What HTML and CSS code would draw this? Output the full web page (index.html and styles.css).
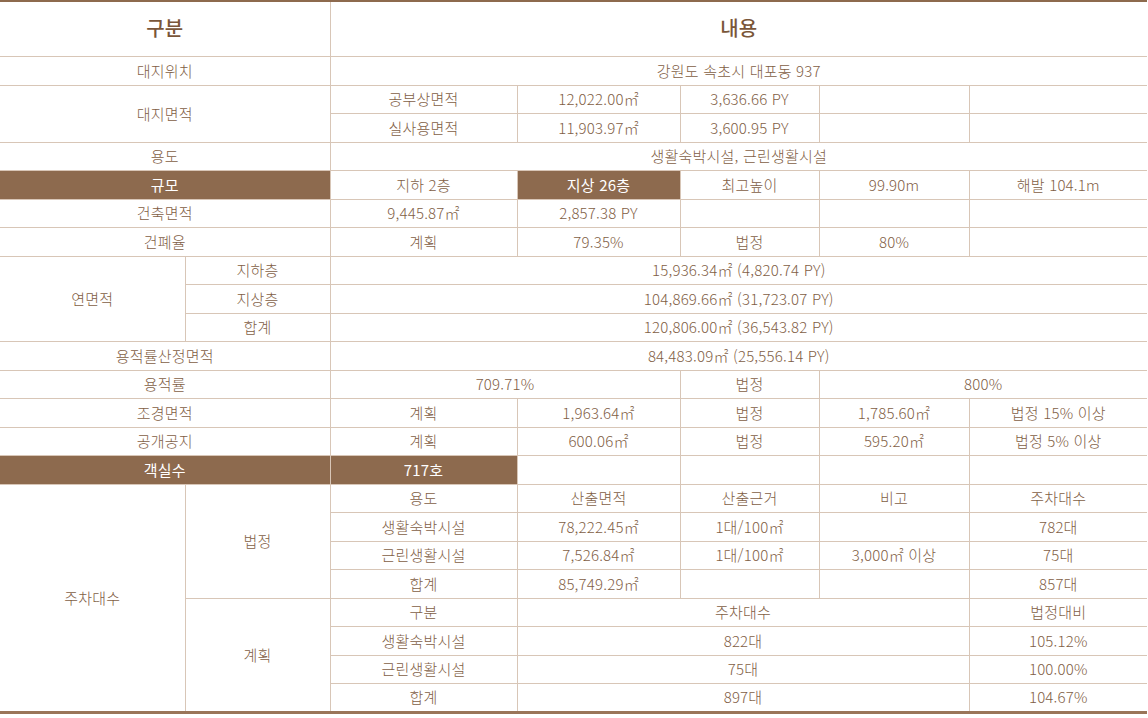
FILE: index.html
```html
<!DOCTYPE html>
<html lang="ko">
<head>
<meta charset="utf-8">
<link rel="stylesheet" href="styles.css">
</head>
<body>
<table class="spec">
  <colgroup>
    <col class="c1"><col class="c2"><col class="c3"><col class="c4"><col class="c5"><col class="c6"><col class="c7">
  </colgroup>
  <thead>
    <tr class="head"><th colspan="2">구분</th><th colspan="5">내용</th></tr>
  </thead>
  <tbody>
    <tr><td colspan="2">대지위치</td><td colspan="5">강원도 속초시 대포동 937</td></tr>
    <tr><td colspan="2" rowspan="2">대지면적</td><td>공부상면적</td><td>12,022.00㎡</td><td>3,636.66 PY</td><td></td><td></td></tr>
    <tr><td>실사용면적</td><td>11,903.97㎡</td><td>3,600.95 PY</td><td></td><td></td></tr>
    <tr><td colspan="2">용도</td><td colspan="5">생활숙박시설, 근린생활시설</td></tr>
    <tr><td colspan="2" class="hl">규모</td><td>지하 2층</td><td class="hl">지상 26층</td><td>최고높이</td><td>99.90m</td><td>해발 104.1m</td></tr>
    <tr><td colspan="2">건축면적</td><td>9,445.87㎡</td><td>2,857.38 PY</td><td></td><td></td><td></td></tr>
    <tr><td colspan="2">건폐율</td><td>계획</td><td>79.35%</td><td>법정</td><td>80%</td><td></td></tr>
    <tr><td rowspan="3">연면적</td><td>지하층</td><td colspan="5">15,936.34㎡ (4,820.74 PY)</td></tr>
    <tr><td>지상층</td><td colspan="5">104,869.66㎡ (31,723.07 PY)</td></tr>
    <tr><td>합계</td><td colspan="5">120,806.00㎡ (36,543.82 PY)</td></tr>
    <tr><td colspan="2">용적률산정면적</td><td colspan="5">84,483.09㎡ (25,556.14 PY)</td></tr>
    <tr><td colspan="2">용적률</td><td colspan="2">709.71%</td><td>법정</td><td colspan="2">800%</td></tr>
    <tr><td colspan="2">조경면적</td><td>계획</td><td>1,963.64㎡</td><td>법정</td><td>1,785.60㎡</td><td>법정 15% 이상</td></tr>
    <tr><td colspan="2">공개공지</td><td>계획</td><td>600.06㎡</td><td>법정</td><td>595.20㎡</td><td>법정 5% 이상</td></tr>
    <tr><td colspan="2" class="hl">객실수</td><td class="hl">717호</td><td></td><td></td><td></td><td></td></tr>
    <tr><td rowspan="8">주차대수</td><td rowspan="4">법정</td><td>용도</td><td>산출면적</td><td>산출근거</td><td>비고</td><td>주차대수</td></tr>
    <tr><td>생활숙박시설</td><td>78,222.45㎡</td><td>1대/100㎡</td><td></td><td>782대</td></tr>
    <tr><td>근린생활시설</td><td>7,526.84㎡</td><td>1대/100㎡</td><td>3,000㎡ 이상</td><td>75대</td></tr>
    <tr><td>합계</td><td>85,749.29㎡</td><td></td><td></td><td>857대</td></tr>
    <tr><td rowspan="4">계획</td><td>구분</td><td colspan="3">주차대수</td><td>법정대비</td></tr>
    <tr><td>생활숙박시설</td><td colspan="3">822대</td><td>105.12%</td></tr>
    <tr><td>근린생활시설</td><td colspan="3">75대</td><td>100.00%</td></tr>
    <tr><td>합계</td><td colspan="3">897대</td><td>104.67%</td></tr>
  </tbody>
</table>
</body>
</html>
```

FILE: styles.css
```css
html, body {
  margin: 0;
  padding: 0;
  background: #ffffff;
}

body {
  font-family: "Noto Sans CJK KR", "Noto Sans", sans-serif;
  color: #7f5e45;
}

.spec {
  width: 1147px;
  border-collapse: collapse;
  table-layout: fixed;
  border-top: 2px solid #8d6a4e;
  border-bottom: 3px solid #9a7559;
}

.c1 { width: 185px; }
.c2 { width: 145px; }
.c3 { width: 187px; }
.c4 { width: 163px; }
.c5 { width: 139px; }
.c6 { width: 150px; }
.c7 { width: 178px; }

.spec th,
.spec td {
  border: 1px solid #d8c6b7;
  text-align: center;
  vertical-align: middle;
  padding: 0;
  font-size: 15px;
  font-weight: 300;
  letter-spacing: 0.2px;
  line-height: 20px;
}

.spec tr > :first-child { border-left: none; }
.spec tr > :last-child { border-right: none; }
.spec td[rowspan="8"], .spec td[rowspan="3"] { border-left: none; }

.spec thead th {
  border-top: none;
  font-size: 20px;
  font-weight: 500;
  color: #7a5639;
  height: 52px;
  padding-bottom: 2px;
}

.spec tbody tr { height: 28.5px; }

.spec td.hl {
  background: #8d6a4e;
  color: #ffffff;
  font-weight: 400;
}
```
